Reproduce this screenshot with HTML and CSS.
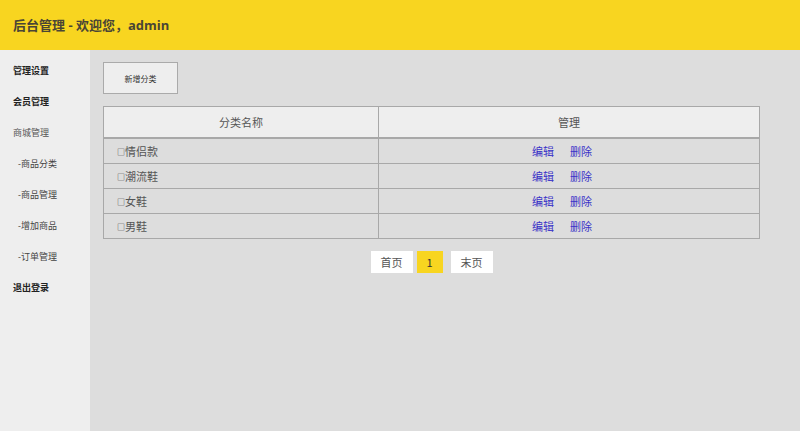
FILE: index.html
```html
<!DOCTYPE html>
<html lang="zh-CN">
<head>
    <meta charset="UTF-8">
    <meta name="viewport" content="width=device-width, initial-scale=1.0">
    <title>后台管理</title>
    <link rel="stylesheet" href="styles.css">
</head>
<body>
    <div class="header">后台管理 - 欢迎您，admin</div>

    <div class="wrap">
        <div class="sidebar">
            <a href="#" class="menu-title">管理设置</a>
            <a href="#" class="menu-title">会员管理</a>
            <a href="#" class="menu-group">商城管理</a>
            <a href="#" class="menu-sub">-商品分类</a>
            <a href="#" class="menu-sub">-商品管理</a>
            <a href="#" class="menu-sub">-增加商品</a>
            <a href="#" class="menu-sub">-订单管理</a>
            <a href="#" class="menu-title">退出登录</a>
        </div>

        <div class="main">
            <button class="add-btn">新增分类</button>

            <table class="cate-table">
                <thead>
                    <tr>
                        <th>分类名称</th>
                        <th>管理</th>
                    </tr>
                </thead>
                <tbody>
                    <tr>
                        <td class="name"><span class="box">□</span>情侣款</td>
                        <td class="ops"><a href="#">编辑</a><a href="#">删除</a></td>
                    </tr>
                    <tr>
                        <td class="name"><span class="box">□</span>潮流鞋</td>
                        <td class="ops"><a href="#">编辑</a><a href="#">删除</a></td>
                    </tr>
                    <tr>
                        <td class="name"><span class="box">□</span>女鞋</td>
                        <td class="ops"><a href="#">编辑</a><a href="#">删除</a></td>
                    </tr>
                    <tr>
                        <td class="name"><span class="box">□</span>男鞋</td>
                        <td class="ops"><a href="#">编辑</a><a href="#">删除</a></td>
                    </tr>
                </tbody>
            </table>

            <div class="pager">
                <a href="#">首页</a>
                <a href="#" class="current">1</a>
                <a href="#">末页</a>
            </div>
        </div>
    </div>
</body>
</html>
```

FILE: styles.css
```css
body {
    margin: 0;
    font-family: 'Open Sans', 'Noto Sans CJK SC', sans-serif;
    background-color: #dddddd;
}

.header {
    height: 50px;
    line-height: 50px;
    padding-left: 13px;
    background-color: #f8d520;
    color: #4a4535;
    font-size: 13px;
    font-weight: bold;
}

.wrap {
    display: flex;
    min-height: 381px;
}

.sidebar {
    width: 90px;
    background-color: #eeeeee;
    padding-top: 14px;
    display: flex;
    flex-direction: column;
}

.sidebar a {
    display: block;
    height: 31px;
    font-size: 9px;
    text-decoration: none;
    color: #333;
}

.menu-title {
    padding-left: 13px;
    font-weight: bold;
    color: #222 !important;
}

.menu-group {
    padding-left: 13px;
    color: #555 !important;
}

.menu-sub {
    padding-left: 18px;
    color: #444 !important;
}

.main {
    flex: 1;
    padding: 12px 13px;
}

.add-btn {
    display: block;
    width: 75px;
    height: 32px;
    font-family: 'Noto Sans CJK SC', sans-serif;
    font-size: 8px;
    color: #333;
    background-color: #eeeeee;
    border: 1px solid #aaa;
    padding: 0;
    margin-bottom: 12px;
}

.cate-table {
    width: 657px;
    border-collapse: collapse;
    font-family: 'Noto Sans CJK SC', sans-serif;
    font-size: 11px;
    color: #555;
}

.cate-table th {
    height: 30px;
    background-color: #eeeeee;
    font-weight: normal;
    border: 1px solid #a8a8a8;
    border-bottom-width: 2px;
    padding: 0;
}

.cate-table th:first-child {
    width: 274px;
}

.cate-table td {
    height: 24px;
    border: 1px solid #a8a8a8;
    padding: 0;
}

.cate-table td.name {
    padding-left: 13px;
}

.box {
    font-size: 8px;
    color: #333;
    vertical-align: 1px;
}

.cate-table td.ops {
    text-align: center;
}

.ops a {
    color: #3a33c8;
    text-decoration: none;
    margin: 0 8px;
}

.ops a:last-child {
    margin-right: 22px;
}

.pager {
    width: 657px;
    margin-top: 12px;
    display: flex;
    justify-content: center;
    gap: 4px;
}

.pager a {
    display: block;
    height: 22px;
    line-height: 22px;
    padding: 0 10px;
    background-color: #fff;
    font-family: 'Noto Sans CJK SC', sans-serif;
    font-size: 11px;
    color: #555;
    text-decoration: none;
}

.pager a.current {
    width: 26px;
    padding: 0;
    text-align: center;
    background-color: #f8d520;
    color: #333;
    margin-right: 4px;
}
```
